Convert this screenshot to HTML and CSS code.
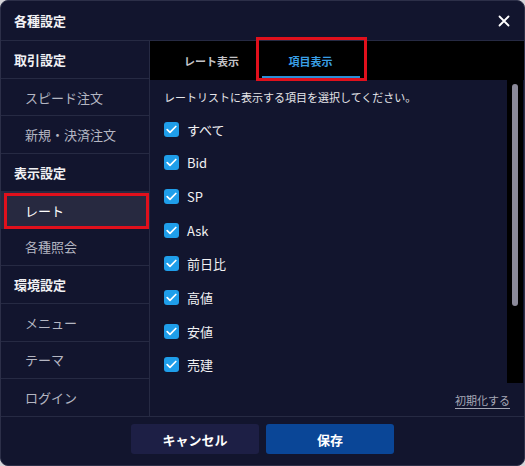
FILE: index.html
```html
<!DOCTYPE html>
<html lang="ja">
<head>
<meta charset="utf-8">
<title>各種設定</title>
<link rel="stylesheet" href="styles.css">
</head>
<body>
<div class="dialog">
  <div class="header">
    <span class="title">各種設定</span>
    <svg class="close" width="12" height="12" viewBox="0 0 12 12"><path d="M1.5 1.5 L10.5 10.5 M10.5 1.5 L1.5 10.5" stroke="#fff" stroke-width="1.8" stroke-linecap="round"/></svg>
  </div>
  <div class="body">
    <nav class="sidebar">
      <div class="nav-head">取引設定</div>
      <div class="nav-item">スピード注文</div>
      <div class="nav-item">新規・決済注文</div>
      <div class="nav-head">表示設定</div>
      <div class="nav-item selected">レート</div>
      <div class="nav-item">各種照会</div>
      <div class="nav-head">環境設定</div>
      <div class="nav-item">メニュー</div>
      <div class="nav-item">テーマ</div>
      <div class="nav-item last">ログイン</div>
    </nav>
    <div class="main">
      <div class="tabs">
        <div class="tab">レート表示</div>
        <div class="tab active">項目表示</div>
      </div>
      <div class="content">
        <div class="list">
          <p class="desc">レートリストに表示する項目を選択してください。</p>
          <div class="items">
            <label class="item"><span class="check"><svg width="11" height="9" viewBox="0 0 11 9"><path d="M1.2 4.6 L4 7.3 L9.8 1.5" fill="none" stroke="#fff" stroke-width="1.7" stroke-linecap="round" stroke-linejoin="round"/></svg></span>すべて</label>
            <label class="item"><span class="check"><svg width="11" height="9" viewBox="0 0 11 9"><path d="M1.2 4.6 L4 7.3 L9.8 1.5" fill="none" stroke="#fff" stroke-width="1.7" stroke-linecap="round" stroke-linejoin="round"/></svg></span>Bid</label>
            <label class="item"><span class="check"><svg width="11" height="9" viewBox="0 0 11 9"><path d="M1.2 4.6 L4 7.3 L9.8 1.5" fill="none" stroke="#fff" stroke-width="1.7" stroke-linecap="round" stroke-linejoin="round"/></svg></span>SP</label>
            <label class="item"><span class="check"><svg width="11" height="9" viewBox="0 0 11 9"><path d="M1.2 4.6 L4 7.3 L9.8 1.5" fill="none" stroke="#fff" stroke-width="1.7" stroke-linecap="round" stroke-linejoin="round"/></svg></span>Ask</label>
            <label class="item"><span class="check"><svg width="11" height="9" viewBox="0 0 11 9"><path d="M1.2 4.6 L4 7.3 L9.8 1.5" fill="none" stroke="#fff" stroke-width="1.7" stroke-linecap="round" stroke-linejoin="round"/></svg></span>前日比</label>
            <label class="item"><span class="check"><svg width="11" height="9" viewBox="0 0 11 9"><path d="M1.2 4.6 L4 7.3 L9.8 1.5" fill="none" stroke="#fff" stroke-width="1.7" stroke-linecap="round" stroke-linejoin="round"/></svg></span>高値</label>
            <label class="item"><span class="check"><svg width="11" height="9" viewBox="0 0 11 9"><path d="M1.2 4.6 L4 7.3 L9.8 1.5" fill="none" stroke="#fff" stroke-width="1.7" stroke-linecap="round" stroke-linejoin="round"/></svg></span>安値</label>
            <label class="item"><span class="check"><svg width="11" height="9" viewBox="0 0 11 9"><path d="M1.2 4.6 L4 7.3 L9.8 1.5" fill="none" stroke="#fff" stroke-width="1.7" stroke-linecap="round" stroke-linejoin="round"/></svg></span>売建</label>
          </div>
        </div>
        <div class="scroll"><div class="thumb"></div></div>
      </div>
      <div class="reset-row"><span class="reset">初期化する</span></div>
    </div>
  </div>
  <div class="footer">
    <button class="btn cancel">キャンセル</button>
    <button class="btn save">保存</button>
  </div>
</div>
</body>
</html>
```
FILE: styles.css
```css
* { box-sizing: border-box; }
html, body { margin: 0; padding: 0; }
body {
  width: 525px;
  height: 466px;
  background: #d4d4d8;
  font-family: "Noto Sans CJK JP", "Noto Sans", sans-serif;
  overflow: hidden;
}
.dialog {
  width: 525px;
  height: 466px;
  background: #12152e;
  border: 1px solid #2c2f48;
  border-radius: 8px;
  display: flex;
  flex-direction: column;
  color: #fff;
  overflow: hidden;
}
.header {
  height: 40px;
  flex: none;
  display: flex;
  align-items: center;
  justify-content: space-between;
  padding: 0 13px 0 13px;
  border-bottom: 1px solid #262a43;
}
.title {
  font-size: 13px;
  font-weight: 700;
  color: #f2f2f4;
}
.close { display: block; margin-right: 1px; }
.body {
  flex: 1;
  display: flex;
  min-height: 0;
}
.sidebar {
  width: 149px;
  flex: none;
  border-right: 1px solid #262a43;
  display: flex;
  flex-direction: column;
}
.nav-head, .nav-item {
  flex: 1;
  display: flex;
  align-items: center;
  border-bottom: 1px solid #262a43;
  font-size: 13px;
}
.nav-head {
  padding-left: 13px;
  font-weight: 700;
  color: #f0f0f3;
}
.nav-item {
  padding-left: 24px;
  color: #b4b6c2;
}
.nav-item.last { border-bottom: none; }
.nav-item.selected {
  position: relative;
  background: #272940;
  color: #ffffff;
  border-bottom: none;
}
.nav-item.selected::after {
  content: "";
  position: absolute;
  left: 3px;
  right: 0;
  top: 1px;
  bottom: 0;
  border: 3px solid #e0101c;
}
.main {
  flex: 1;
  display: flex;
  flex-direction: column;
  min-width: 0;
}
.tabs {
  height: 39px;
  flex: none;
  background: #000;
  display: flex;
  padding-left: 12px;
}
.tab {
  width: 99px;
  display: flex;
  align-items: center;
  justify-content: center;
  font-size: 11px;
  font-weight: 700;
  color: #c4c4c8;
  position: relative;
}
.tab.active {
  color: #3a9fe6;
}
.tab.active::before {
  content: "";
  position: absolute;
  left: 1px;
  right: 0;
  bottom: 2px;
  height: 2px;
  background: #2a8ed6;
}
.tab.active::after {
  content: "";
  position: absolute;
  left: -5px;
  right: -7px;
  top: -4px;
  bottom: -1px;
  border: 3px solid #e0101c;
}
.content {
  flex: 1;
  display: flex;
  min-height: 0;
}
.list {
  flex: 1;
  padding: 8px 0 0 14px;
}
.desc {
  margin: 0;
  font-size: 11px;
  line-height: 18px;
  color: #e6e6ea;
}
.items {
  margin-top: 13px;
  display: flex;
  flex-direction: column;
  gap: 13.7px;
}
.item {
  display: flex;
  align-items: center;
  gap: 8px;
  height: 20px;
  font-size: 13px;
  color: #f0f0f2;
}
.check {
  width: 15px;
  height: 15px;
  border-radius: 3px;
  background: #1f9eea;
  display: flex;
  align-items: center;
  justify-content: center;
}
.check svg { display: block; }
.scroll {
  width: 16px;
  flex: none;
  margin-right: 1px;
  background: #000;
  padding: 4px 0 0 5px;
}
.thumb {
  width: 6px;
  height: 222px;
  border-radius: 3px;
  background: #8b8a9a;
}
.reset-row {
  height: 33px;
  flex: none;
  display: flex;
  align-items: center;
  justify-content: flex-end;
  padding-right: 14px;
}
.reset {
  font-size: 11px;
  color: #a6a8b6;
  text-decoration: underline;
  text-underline-offset: 3px;
}
.footer {
  height: 49px;
  flex: none;
  border-top: 1px solid #262a43;
  display: flex;
  justify-content: center;
  align-items: flex-start;
  padding-top: 7px;
  gap: 7px;
}
.btn {
  width: 128px;
  height: 30px;
  border: none;
  border-radius: 3px;
  font-family: "Noto Sans CJK JP", "Noto Sans", sans-serif;
  font-size: 13px;
  font-weight: 700;
  color: #fff;
}
.cancel { background: #1d1f45; }
.save { background: #0a4697; }
```
